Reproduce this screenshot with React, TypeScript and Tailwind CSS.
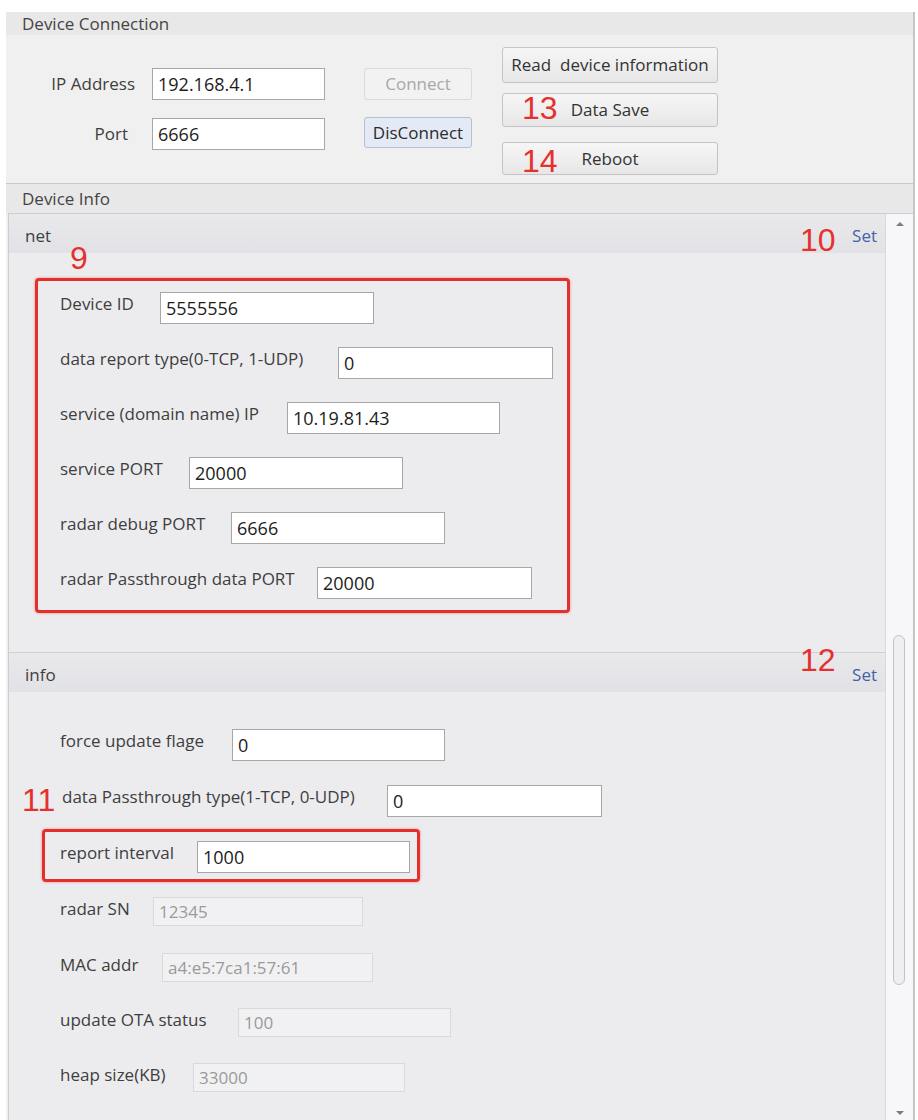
import React from 'react';

type Row = { label: string; value: string; labelW: string; inputW: string };

const netRows: Row[] = [
  { label: 'Device ID', value: '5555556', labelW: 'w-[100px]', inputW: 'w-[214px]' },
  { label: 'data report type(0-TCP, 1-UDP)', value: '0', labelW: 'w-[278px]', inputW: 'w-[215px]' },
  { label: 'service (domain name) IP', value: '10.19.81.43', labelW: 'w-[227px]', inputW: 'w-[213px]' },
  { label: 'service PORT', value: '20000', labelW: 'w-[129px]', inputW: 'w-[214px]' },
  { label: 'radar debug PORT', value: '6666', labelW: 'w-[171px]', inputW: 'w-[214px]' },
  { label: 'radar Passthrough data PORT', value: '20000', labelW: 'w-[257px]', inputW: 'w-[215px]' },
];

function TextBox({ value, className = '' }: { value: string; className?: string }) {
  return (
    <input
      readOnly
      defaultValue={value}
      className={`h-[32px] shrink-0 border border-[#a7a7a7] bg-white pl-[5px] text-[18px] text-[#1c1c1c] outline-none ${className}`}
    />
  );
}

function ReadOnlyBox({ value, className = '' }: { value: string; className?: string }) {
  return (
    <input
      disabled
      defaultValue={value}
      className={`h-[29px] shrink-0 border border-[#d9d9dc] bg-[#f1f1f3] pl-[5px] text-[17px] text-[#9a9a9a] outline-none ${className}`}
    />
  );
}

function Label({ text, className = '' }: { text: string; className?: string }) {
  return (
    <span className={`shrink-0 whitespace-nowrap text-[17px] leading-[24px] text-[#3e3e3e] ${className}`}>
      {text}
    </span>
  );
}

function Mark({ n, className }: { n: string; className: string }) {
  return (
    <span className={`absolute font-['Liberation_Sans',sans-serif] text-[32px] leading-none text-[#e5312e] ${className}`}>
      {n}
    </span>
  );
}

function SectionHeader({ title }: { title: string }) {
  return (
    <div className="flex h-[39px] items-start justify-between bg-gradient-to-b from-[#e9e9ec] to-[#e2e2e6] pl-[16px] pr-[8px] pt-[10px]">
      <span className="text-[17px] leading-[24px] text-[#3e3e3e]">{title}</span>
      <span className="text-[17px] leading-[24px] text-[#4460a6]">Set</span>
    </div>
  );
}

export default function App() {
  return (
    <div className="min-h-screen bg-white pl-[6px] pt-[12px] font-['Open_Sans','Liberation_Sans',sans-serif]">
      <div className="flex h-[1108px] w-[909px] flex-col overflow-hidden border-r-2 border-[#c6c6c6] bg-[#f0f0f0]">
        {/* Device Connection */}
        <div className="h-[23px] shrink-0 bg-[#e8e8e8] pl-[16px] text-[17px] leading-[23px] text-[#444]">
          Device Connection
        </div>
        <div className="flex h-[148px] shrink-0">
          <div className="flex flex-col gap-[18px] pt-[33px]">
            <div className="flex items-center">
              <span className="w-[146px] pr-[17px] text-right text-[17px] text-[#3e3e3e]">IP Address</span>
              <TextBox value="192.168.4.1" className="h-[31px] w-[173px]" />
            </div>
            <div className="flex items-center">
              <span className="w-[146px] pr-[24px] text-right text-[17px] text-[#3e3e3e]">Port</span>
              <TextBox value="6666" className="h-[31px] w-[173px]" />
            </div>
          </div>
          <div className="ml-[39px] flex flex-col gap-[17px] pt-[33px]">
            <button className="h-[32px] w-[108px] rounded-[3px] border border-[#dadada] bg-[#f2f2f2] text-[17px] text-[#a8a8a8]">
              Connect
            </button>
            <button className="h-[31px] w-[108px] rounded-[3px] border border-[#b3c0d6] bg-[#e4eaf5] text-[17px] text-[#2c2c2c]">
              DisConnect
            </button>
          </div>
          <div className="ml-[30px] flex flex-col pt-[12px]">
            <button className="h-[36px] w-[216px] whitespace-pre rounded-[3px] border border-[#c4c4c4] bg-gradient-to-b from-[#f6f6f6] to-[#e7e7e7] text-[17px] text-[#333]">
              Read  device information
            </button>
            <button className="relative mt-[10px] h-[34px] w-[216px] rounded-[3px] border border-[#c4c4c4] bg-gradient-to-b from-[#f6f6f6] to-[#e7e7e7] text-[17px] text-[#333]">
              Data Save
              <Mark n="13" className="left-[19px] top-[-2px]" />
            </button>
            <button className="relative mt-[15px] h-[33px] w-[216px] rounded-[3px] border border-[#c4c4c4] bg-gradient-to-b from-[#f6f6f6] to-[#e7e7e7] text-[17px] text-[#333]">
              Reboot
              <Mark n="14" className="left-[19px] top-[2px]" />
            </button>
          </div>
        </div>

        {/* Device Info */}
        <div className="h-[30px] shrink-0 border-t border-[#c9c9c9] bg-[#e8e8e8] pl-[16px] text-[17px] leading-[29px] text-[#444]">
          Device Info
        </div>
        <div className="ml-[2px] flex flex-1 border-t border-[#cdcdd1]">
          <div className="relative w-[877px] shrink-0 border-l border-[#cdcdd1] bg-[#ececef]">
            {/* net */}
            <SectionHeader title="net" />
            <div className="pb-[39px] pt-[25px]">
              <div className="ml-[26px] flex w-[535px] flex-col gap-[23px] rounded-[4px] border-[3px] border-[#e3302b] pb-[11px] pl-[22px] pt-[11px] shadow-[0_0_3px_rgba(240,80,70,0.6)]">
                {netRows.map((r) => (
                  <div key={r.label} className="flex items-start">
                    <Label text={r.label} className={r.labelW} />
                    <TextBox value={r.value} className={r.inputW} />
                  </div>
                ))}
              </div>
            </div>

            {/* info */}
            <div className="border-t border-[#d0d0d4]">
              <SectionHeader title="info" />
              <div className="flex flex-col">
                <div className="mt-[37px] flex items-start pl-[51px]">
                  <Label text="force update flage" className="w-[172px]" />
                  <TextBox value="0" className="h-[31px] w-[213px]" />
                </div>
                <div className="mt-[24px] flex items-start pl-[53px]">
                  <Label text="data Passthrough type(1-TCP, 0-UDP)" className="w-[325px]" />
                  <TextBox value="0" className="h-[31px] w-[215px]" />
                </div>
                <div className="ml-[33px] mt-[12px] flex h-[53px] w-[378px] items-start rounded-[4px] border-[3px] border-[#e3302b] pl-[15px] pt-[9px] shadow-[0_0_3px_rgba(240,80,70,0.6)]">
                  <Label text="report interval" className="w-[137px]" />
                  <TextBox value="1000" className="w-[213px]" />
                </div>
                <div className="mt-[15px] flex items-start pl-[51px]">
                  <Label text="radar SN" className="w-[93px]" />
                  <ReadOnlyBox value="12345" className="h-[28px] w-[210px]" />
                </div>
                <div className="mt-[27px] flex items-start pl-[51px]">
                  <Label text="MAC addr" className="w-[102px]" />
                  <ReadOnlyBox value="a4:e5:7ca1:57:61" className="w-[211px]" />
                </div>
                <div className="mt-[26px] flex items-start pl-[51px]">
                  <Label text="update OTA status" className="w-[178px]" />
                  <ReadOnlyBox value="100" className="w-[213px]" />
                </div>
                <div className="mt-[26px] flex items-start pl-[51px]">
                  <Label text="heap size(KB)" className="w-[133px]" />
                  <ReadOnlyBox value="33000" className="w-[212px]" />
                </div>
              </div>
            </div>

            <Mark n="9" className="left-[61px] top-[28px]" />
            <Mark n="10" className="left-[791px] top-[10px]" />
            <Mark n="12" className="left-[791px] top-[430px]" />
            <Mark n="11" className="left-[13px] top-[570px]" />
          </div>

          {/* scrollbar */}
          <div className="flex flex-1 flex-col border-l border-[#d9d9dd] bg-[#f7f7f9] pt-[8px]">
            <div className="ml-[10px] h-0 w-0 border-x-4 border-b-4 border-x-transparent border-b-[#7c7c7c]" />
            <div className="ml-[7px] mt-[409px] h-[350px] w-[12px] rounded-full border border-[#c2c2c6] bg-[#efeff2]" />
            <div className="ml-[10px] mt-[126px] h-0 w-0 border-x-4 border-t-4 border-x-transparent border-t-[#7c7c7c]" />
          </div>
        </div>
      </div>
    </div>
  );
}
